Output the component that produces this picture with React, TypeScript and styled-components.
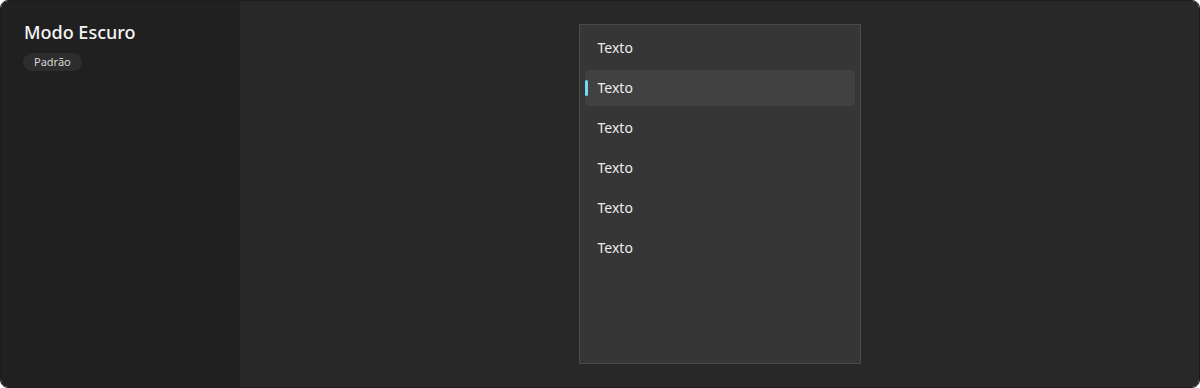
import React from 'react';
import styled, { createGlobalStyle } from 'styled-components';

const GlobalStyle = createGlobalStyle`
	html, body {
		margin: 0;
		padding: 0;
		background: #ffffff;
	}
	* {
		box-sizing: border-box;
	}
`;

const Frame = styled.div`
	width: 1200px;
	height: 388px;
	display: flex;
	border-radius: 8px;
	overflow: hidden;
	border: 1px solid #1c1c1c;
	font-family: "Noto Sans", "Open Sans", sans-serif;
	color: #f2f2f2;
`;

const Sidebar = styled.aside`
	width: 239px;
	flex-shrink: 0;
	background: #202020;
	padding: 19px 22px;
	display: flex;
	flex-direction: column;
	align-items: flex-start;
	gap: 9px;
`;

const Title = styled.h1`
	margin: 0 0 0 1px;
	font-size: 18px;
	font-weight: 500;
	line-height: 24px;
	color: #f5f5f5;
`;

const Badge = styled.span`
	display: inline-block;
	padding: 0 11px;
	height: 18px;
	line-height: 18px;
	border-radius: 9px;
	background: #2d2d2d;
	font-size: 11px;
	color: #d6d6d6;
`;

const Main = styled.main`
	flex: 1;
	background: #282828;
	display: flex;
	justify-content: center;
	padding-top: 23px;
`;

const Panel = styled.div`
	width: 282px;
	height: 340px;
	background: #363636;
	border: 1px solid #4a4a4a;
	padding: 5px;
	display: flex;
	flex-direction: column;
	gap: 4px;
`;

const Item = styled.div<{ $active?: boolean }>`
	position: relative;
	height: 36px;
	display: flex;
	align-items: center;
	padding: 0 0 2px 13px;
	border-radius: 4px;
	font-size: 14px;
	color: #ececec;
	background: ${(p) => (p.$active ? '#414141' : 'transparent')};

	&::before {
		content: '';
		display: ${(p) => (p.$active ? 'block' : 'none')};
		position: absolute;
		left: 0;
		top: 10px;
		width: 3px;
		height: 16px;
		border-radius: 2px;
		background: #70dcf3;
	}
`;

const items = ['Texto', 'Texto', 'Texto', 'Texto', 'Texto', 'Texto'];

const App = () => (
	<>
		<GlobalStyle />
		<Frame>
			<Sidebar>
				<Title>Modo Escuro</Title>
				<Badge>Padrão</Badge>
			</Sidebar>
			<Main>
				<Panel>
					{items.map((label, i) => (
						<Item key={i} $active={i === 1}>{label}</Item>
					))}
				</Panel>
			</Main>
		</Frame>
	</>
);

export default App;
